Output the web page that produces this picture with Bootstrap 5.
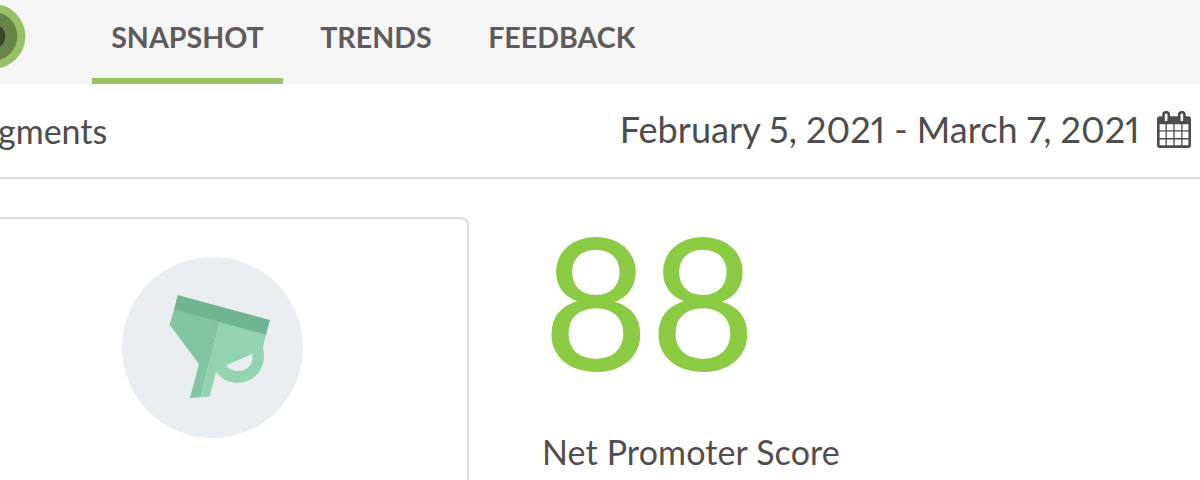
<!DOCTYPE html>
<html lang="en">
<head>
<meta charset="utf-8">
<meta name="viewport" content="width=device-width, initial-scale=1">
<title>Snapshot</title>
<link href="https://cdn.jsdelivr.net/npm/bootstrap@5.3.0/dist/css/bootstrap.min.css" rel="stylesheet">
<style>
  body { font-family: Lato, "Liberation Sans", sans-serif; color: #4d4d4d; height: 480px; background: #fff; font-variant-numeric: proportional-nums; }
  .topbar { height: 84px; background: #f5f5f5; }
  .brand-rings { width: 26px; height: 72px; margin-right: 66.4px; }
  .tabs .nav-link { height: 84px; padding: 19px 18.8px 0; margin-right: 18.9px; border-bottom: 6px solid transparent; border-radius: 0; font-size: 28.6px; line-height: 36px; font-weight: 700; color: #5f5b5c; white-space: nowrap; }
  .tabs .nav-link.active { border-bottom-color: #97c163; }
  .filters { height: 95px; border-bottom: 2px solid #dadada; }
  .segment-label { font-size: 34px; line-height: 40px; margin: 1px 0 0 -2px; }
  .date-label { font-size: 36.1px; line-height: 44px; }
  .date-range { margin: -4px 9px 0 0; gap: 17.5px; }
  .date-range svg { margin-top: 1px; }
  .panel { width: 484px; height: 266px; margin: 38px 0 0 -15px; padding: 38px 0 0 135px; border: 2px solid #dadada; border-bottom: 0; border-radius: 8px 8px 0 0; }
  .score { margin-left: 73px; padding-top: 10px; }
  .score-value { font-size: 184px; line-height: 222px; letter-spacing: -.8px; color: #8bca43; font-size: 183.5px; }
  .score-label { font-size: 34px; line-height: 40px; color: #524e4f; margin-top: 21px; letter-spacing: .12px; white-space: nowrap; }
</style>
<script src="https://cdn.jsdelivr.net/npm/bootstrap@5.3.0/dist/js/bootstrap.bundle.min.js"></script>
</head>
<body class="overflow-hidden">
<header class="topbar d-flex align-items-start">
  <svg class="brand-rings flex-shrink-0" viewBox="0 0 26 72" aria-hidden="true">
    <circle cx="-7" cy="36.3" r="32.4" fill="#97c163"/>
    <circle cx="-7" cy="36.3" r="24.3" fill="#678346"/>
    <circle cx="-7" cy="36.3" r="12.3" fill="#364629"/>
  </svg>
  <nav class="nav tabs flex-nowrap">
    <a class="nav-link active" href="#">SNAPSHOT</a>
    <a class="nav-link" href="#">TRENDS</a>
    <a class="nav-link" href="#">FEEDBACK</a>
  </nav>
</header>
<section class="filters d-flex justify-content-between align-items-center">
  <div class="segment-label">gments</div>
  <div class="date-range d-flex align-items-center">
    <span class="date-label">February 5, 2021 - March 7, 2021</span>
    <svg width="34" height="37" viewBox="0 0 1664 1792" preserveAspectRatio="none" fill="#4d4d4d" aria-hidden="true"><path d="M128 1664h288v-288h-288v288zM480 1664h320v-288h-320v288zM128 1312h288v-320h-288v320zM480 1312h320v-320h-320v320zM128 928h288v-288h-288v288zM864 1664h320v-288h-320v288zM480 928h320v-288h-320v288zM1248 1664h288v-288h-288v288zM864 1312h320v-320h-320v320zM512 448v-288q0-13-9.5-22.5t-22.5-9.5h-64q-13 0-22.5 9.5t-9.5 22.5v288q0 13 9.5 22.5t22.5 9.5h64q13 0 22.5-9.5t9.5-22.5zM1248 1312h288v-320h-288v320zM864 928h320v-288h-320v288zM1248 928h288v-288h-288v288zM1280 448v-288q0-13-9.5-22.5t-22.5-9.5h-64q-13 0-22.5 9.5t-9.5 22.5v288q0 13 9.5 22.5t22.5 9.5h64q13 0 22.5-9.5t9.5-22.5zM1664 384v1280q0 52-38 90t-90 38h-1408q-52 0-90-38t-38-90v-1280q0-52 38-90t90-38h128v-96q0-66 47-113t113-47h64q66 0 113 47t47 113v96h384v-96q0-66 47-113t113-47h64q66 0 113 47t47 113v96h128q52 0 90 38t38 90z"/></svg>
  </div>
</section>
<main class="d-flex align-items-start">
  <div class="panel flex-shrink-0">
    <svg class="d-block" width="181" height="181" viewBox="36 36 543 543" aria-hidden="true">
      <circle cx="307.500" cy="307.500" r="271.500" fill="#e9edf0"/>
      <path d="M348 361L427 326Q431 352 415 367Q401 379 383 378Q360 377 348 361ZM318 380C333 402 356 413 383 413C428 413 462 378 462 335Q462 319 458 305L340 310Z" fill="#93d3b2" fill-rule="evenodd"/>
      <path d="M192 194L330 231L271 457L240 459L267 357L179 239Z" fill="#83c4a2"/>
      <path d="M330 231L468 267L458 311L348 361L318 380L299 455L271 457Z" fill="#93d3b2"/>
      <path d="M203 150L480 225L468 269L192 194Z" fill="#71b491"/>
    </svg>
  </div>
  <div class="score">
    <div class="score-value">88</div>
    <div class="score-label">Net Promoter Score</div>
  </div>
</main>
</body>
</html>
